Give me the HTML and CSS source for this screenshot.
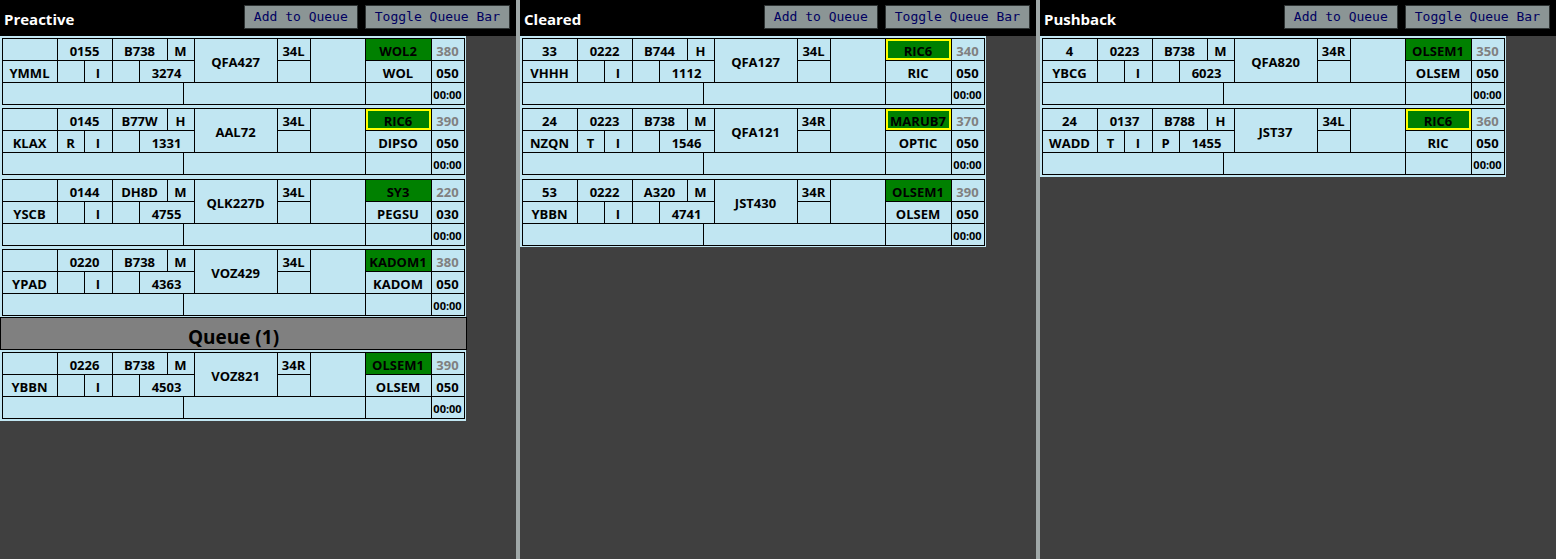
FILE: index.html
```
<!DOCTYPE html>
<html lang="en">
<head>
<meta charset="utf-8">
<title>Flight Strips</title>
<link rel="stylesheet" href="styles.css">
</head>
<body>
<main class="board">
  <section class="bay">
    <header class="bay-header">
      <h2 class="bay-title">Preactive</h2>
      <button type="button" class="bay-button">Add to Queue</button>
      <button type="button" class="bay-button">Toggle Queue Bar</button>
    </header>
    <div class="strips" data-bay="preactive"></div>
  </section>
  <section class="bay">
    <header class="bay-header">
      <h2 class="bay-title">Cleared</h2>
      <button type="button" class="bay-button">Add to Queue</button>
      <button type="button" class="bay-button">Toggle Queue Bar</button>
    </header>
    <div class="strips" data-bay="cleared"></div>
  </section>
  <section class="bay">
    <header class="bay-header">
      <h2 class="bay-title">Pushback</h2>
      <button type="button" class="bay-button">Add to Queue</button>
      <button type="button" class="bay-button">Toggle Queue Bar</button>
    </header>
    <div class="strips" data-bay="pushback"></div>
  </section>
</main>
<script src="app.js"></script>
</body>
</html>
```
FILE: styles.css
```
* {
  box-sizing: border-box;
}

body {
  margin: 0;
  background: #404040;
  color: #000;
  font-family: "Open Sans", "Noto Sans", sans-serif;
}

.board {
  display: grid;
  grid-template-columns: repeat(3, minmax(0, 1fr));
  gap: 4px;
  min-height: 100vh;
  background: #a0a8a8;
}

.bay {
  background: #404040;
}

.bay-header {
  display: flex;
  align-items: flex-start;
  gap: 7px;
  height: 36px;
  padding: 5px 6px 0 4px;
  background: #000;
}

.bay-title {
  flex: 1;
  margin: 0;
  padding-top: 4px;
  color: #fff;
  font-size: 15px;
  font-weight: 700;
  line-height: 20px;
}

.bay-button {
  height: 24px;
  padding: 0 9px;
  border: 1px solid #2f3434;
  background: #8b9595;
  color: #000060;
  font-family: "DejaVu Sans Mono", "Liberation Mono", monospace;
  font-size: 13px;
  line-height: 20px;
  white-space: nowrap;
}

.strips {
  display: flex;
  flex-direction: column;
  align-items: flex-start;
}

.strip {
  padding: 2px 1px 1px 2px;
  background: #c1e6f2;
}

.strip:nth-child(even) {
  padding-bottom: 2px;
}

.strip-grid {
  display: grid;
  grid-template-columns: 54px 26px 27px 26px 27px 15px 10px 82px 32px 54px 65px 32px;
  grid-template-rows: repeat(3, 21px);
  grid-template-areas:
    "bay   time  time  type  type  wake  wake  call  rwy   hdg   sid   rfl"
    "dest  route rules pdc   ssr   ssr   ssr   call  hold  hdg   fix   cfl"
    "note  note  note  note  note  note  rem   rem   rem   rem   free  clock";
  gap: 1px;
  border: 1px solid #000;
  background: #000;
}

.cell {
  display: flex;
  align-items: center;
  justify-content: center;
  padding: 2px 1px 0 0;
  background: #c1e6f2;
  font-size: 13px;
  font-weight: 700;
  line-height: 16px;
  white-space: nowrap;
}

.bay-no { grid-area: bay; }
.time { grid-area: time; }
.type { grid-area: type; }
.wake { grid-area: wake; }
.dest { grid-area: dest; }
.route { grid-area: route; }
.rules { grid-area: rules; }
.pdc { grid-area: pdc; }
.ssr { grid-area: ssr; }
.call { grid-area: call; }
.rwy { grid-area: rwy; }
.hold { grid-area: hold; }
.hdg { grid-area: hdg; }
.sid { grid-area: sid; background: #008000; }
.fix { grid-area: fix; }
.rfl { grid-area: rfl; color: #808080; }
.cfl { grid-area: cfl; }
.note { grid-area: note; }
.rem { grid-area: rem; }
.free { grid-area: free; }
.clock { grid-area: clock; font-size: 11px; }

.sid-alert {
  box-shadow: inset 0 0 0 2px #ffff00;
}

.queue-bar {
  display: flex;
  align-items: center;
  justify-content: center;
  width: 467px;
  height: 33px;
  margin: -1px 0 0;
  padding-top: 6px;
  border: 1px solid #000;
  background: #808080;
  font-size: 19px;
  font-weight: 700;
  line-height: 24px;
}
```
FILE: app.js
```
const FIELDS = [
  "bay-no", "time", "type", "wake", "dest", "route", "rules", "pdc", "ssr",
  "call", "rwy", "sid", "fix", "rfl", "cfl", "clock", "hold", "hdg", "note", "rem", "free"
];

// Rows follow the order of FIELDS; a leading "!" on the SID marks an alert.
const BAYS = {
  preactive: [
    ["", "0155", "B738", "M", "YMML", "", "I", "", "3274", "QFA427", "34L", "WOL2", "WOL", "380", "050", "00:00"],
    ["", "0145", "B77W", "H", "KLAX", "R", "I", "", "1331", "AAL72", "34L", "!RIC6", "DIPSO", "390", "050", "00:00"],
    ["", "0144", "DH8D", "M", "YSCB", "", "I", "", "4755", "QLK227D", "34L", "SY3", "PEGSU", "220", "030", "00:00"],
    ["", "0220", "B738", "M", "YPAD", "", "I", "", "4363", "VOZ429", "34L", "KADOM1", "KADOM", "380", "050", "00:00"],
    "Queue (1)",
    ["", "0226", "B738", "M", "YBBN", "", "I", "", "4503", "VOZ821", "34R", "OLSEM1", "OLSEM", "390", "050", "00:00"]
  ],
  cleared: [
    ["33", "0222", "B744", "H", "VHHH", "", "I", "", "1112", "QFA127", "34L", "!RIC6", "RIC", "340", "050", "00:00"],
    ["24", "0223", "B738", "M", "NZQN", "T", "I", "", "1546", "QFA121", "34R", "!MARUB7", "OPTIC", "370", "050", "00:00"],
    ["53", "0222", "A320", "M", "YBBN", "", "I", "", "4741", "JST430", "34R", "OLSEM1", "OLSEM", "390", "050", "00:00"]
  ],
  pushback: [
    ["4", "0223", "B738", "M", "YBCG", "", "I", "", "6023", "QFA820", "34R", "OLSEM1", "OLSEM", "350", "050", "00:00"],
    ["24", "0137", "B788", "H", "WADD", "T", "I", "P", "1455", "JST37", "34L", "!RIC6", "RIC", "360", "050", "00:00"]
  ]
};

function element(className, text = "") {
  const node = document.createElement("div");
  node.className = className;
  node.textContent = text;
  return node;
}

function buildStrip(values) {
  const strip = element("strip");
  const grid = element("strip-grid");
  FIELDS.forEach((field, i) => {
    const value = values[i] || "";
    const alert = value.startsWith("!");
    grid.append(element(`cell ${field}${alert ? " sid-alert" : ""}`, value.replace("!", "")));
  });
  strip.append(grid);
  return strip;
}

document.querySelectorAll(".strips").forEach((list) => {
  BAYS[list.dataset.bay].forEach((item) => {
    list.append(typeof item === "string" ? element("queue-bar", item) : buildStrip(item));
  });
});
```
